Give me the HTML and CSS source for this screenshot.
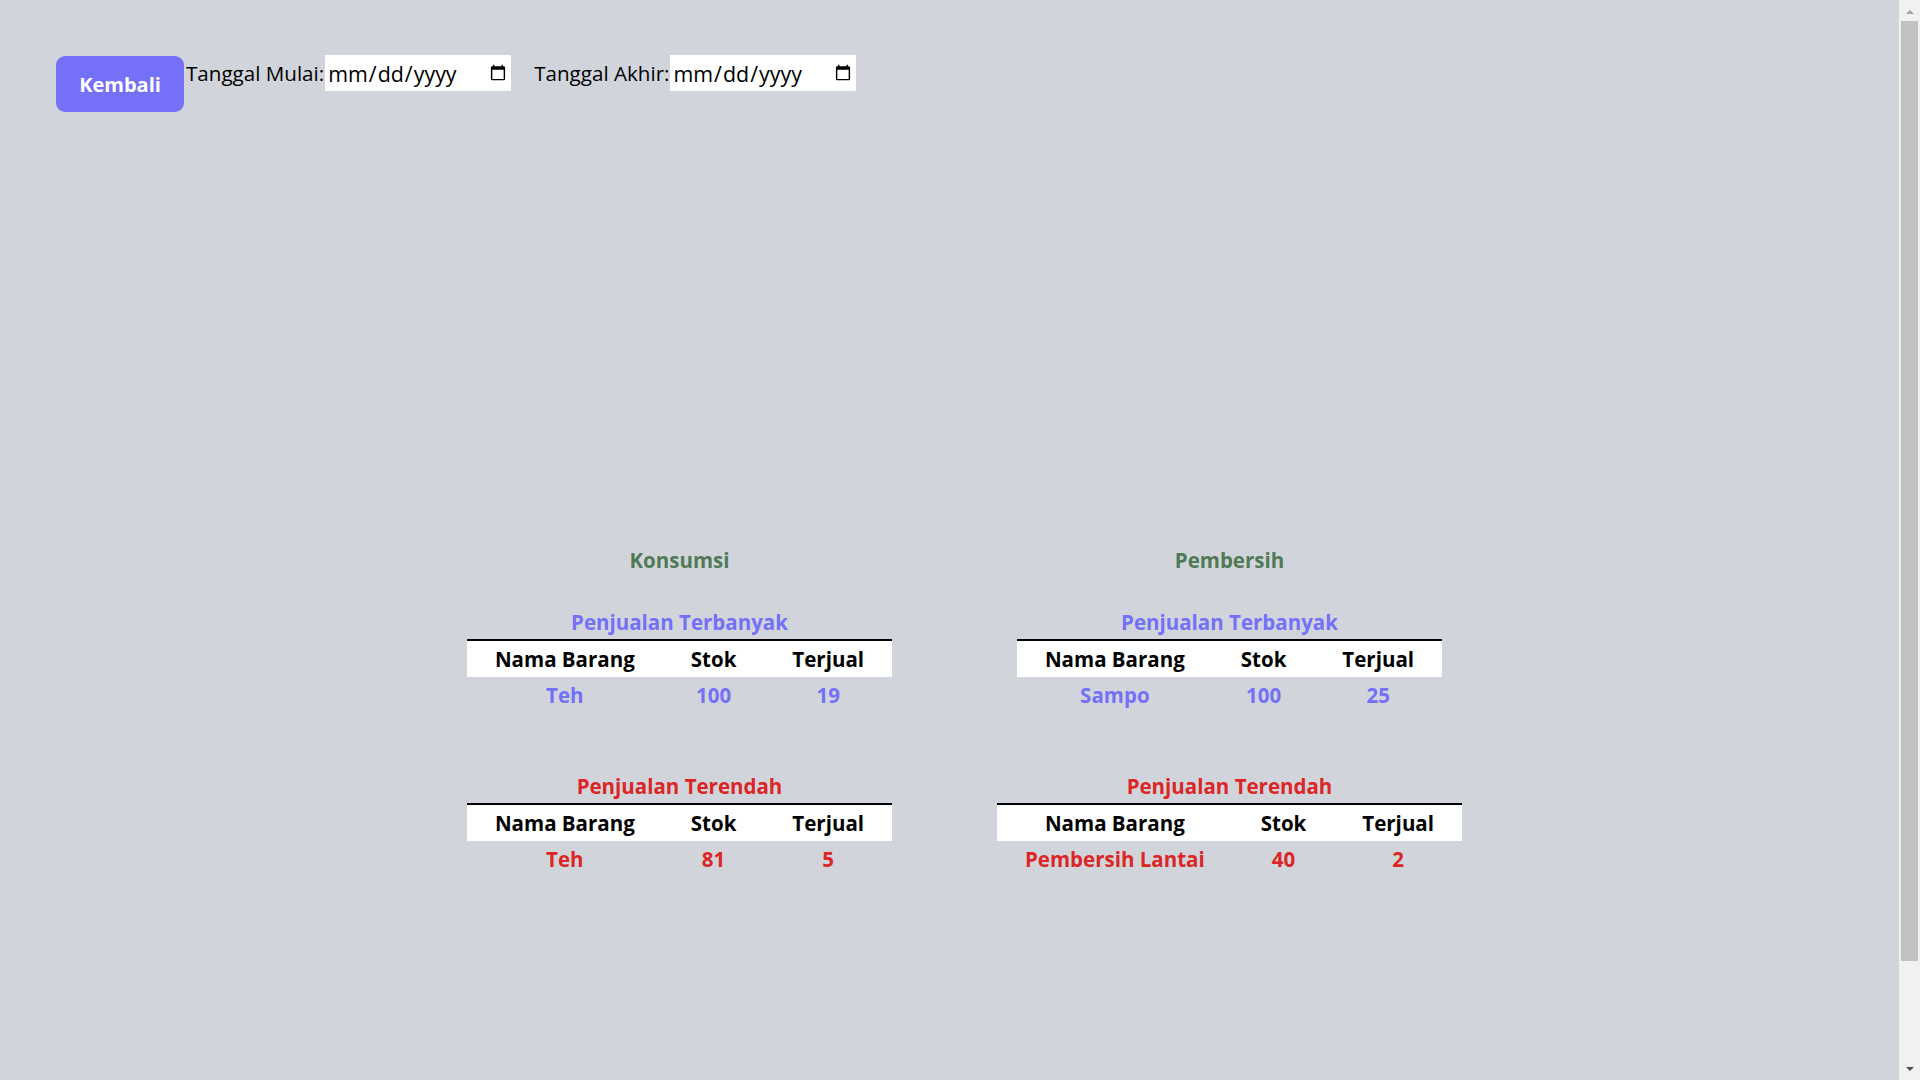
FILE: index.html
```html
<!DOCTYPE html>
<html lang="id">
<head>
<meta charset="utf-8">
<title>Laporan Penjualan</title>
<link rel="stylesheet" href="styles.css">
</head>
<body>
<div class="page">
  <div class="topbar">
    <button class="btn-back" type="button">Kembali</button>
    <div class="date-group">
      <label class="date-label" for="start">Tanggal Mulai:</label>
      <input class="date-input" id="start" type="date">
    </div>
    <div class="date-group date-group-end">
      <label class="date-label" for="end">Tanggal Akhir:</label>
      <input class="date-input" id="end" type="date">
    </div>
  </div>

  <div class="chart-area"></div>

  <div class="categories">
    <section class="category">
      <h2 class="category-title">Konsumsi</h2>
      <div class="report">
        <h3 class="report-title report-top">Penjualan Terbanyak</h3>
        <table class="report-table">
          <thead><tr><th>Nama Barang</th><th>Stok</th><th>Terjual</th></tr></thead>
          <tbody><tr class="row-top"><td>Teh</td><td>100</td><td>19</td></tr></tbody>
        </table>
      </div>
      <div class="report report-second">
        <h3 class="report-title report-low">Penjualan Terendah</h3>
        <table class="report-table">
          <thead><tr><th>Nama Barang</th><th>Stok</th><th>Terjual</th></tr></thead>
          <tbody><tr class="row-low"><td>Teh</td><td>81</td><td>5</td></tr></tbody>
        </table>
      </div>
    </section>

    <section class="category">
      <h2 class="category-title">Pembersih</h2>
      <div class="report">
        <h3 class="report-title report-top">Penjualan Terbanyak</h3>
        <table class="report-table">
          <thead><tr><th>Nama Barang</th><th>Stok</th><th>Terjual</th></tr></thead>
          <tbody><tr class="row-top"><td>Sampo</td><td>100</td><td>25</td></tr></tbody>
        </table>
      </div>
      <div class="report report-second">
        <h3 class="report-title report-low">Penjualan Terendah</h3>
        <table class="report-table">
          <thead><tr><th>Nama Barang</th><th>Stok</th><th>Terjual</th></tr></thead>
          <tbody><tr class="row-low"><td>Pembersih Lantai</td><td>40</td><td>2</td></tr></tbody>
        </table>
      </div>
    </section>
  </div>
</div>
<div class="scrollbar" aria-hidden="true">
  <div class="sb-btn"><span class="sb-arrow sb-arrow-up"></span></div>
  <div class="sb-track"><div class="sb-thumb"></div></div>
  <div class="sb-btn"><span class="sb-arrow sb-arrow-down"></span></div>
</div>
</body>
</html>
```

FILE: styles.css
```css
html {
  background: #d1d5db;
}

body {
  margin: 0;
  display: flex;
  align-items: flex-start;
  background: #d1d5db;
  font-family: "Open Sans", "Noto Sans", "Liberation Sans", sans-serif;
  font-size: 20px;
  line-height: 30px;
  color: #000;
}

.page {
  flex: 1;
  min-width: 0;
  padding-bottom: 316px;
}

/* scrollbar strip */
.scrollbar {
  flex: 0 0 21px;
  width: 21px;
  height: 1080px;
  display: flex;
  flex-direction: column;
  background: #f1f1f1;
}

.sb-btn {
  height: 21px;
  display: flex;
  align-items: center;
  justify-content: center;
  flex-shrink: 0;
}

.sb-arrow {
  width: 0;
  height: 0;
  border-left: 4.5px solid transparent;
  border-right: 4.5px solid transparent;
}

.sb-arrow-up {
  border-bottom: 4px solid #a3a3a3;
  margin-top: 3px;
}

.sb-arrow-down {
  border-top: 4px solid #505050;
  margin-top: -2px;
}

.sb-track {
  flex: 1;
  padding: 0 2px;
}

.sb-thumb {
  height: 940px;
  background: #c1c1c1;
}

/* top bar */
.topbar {
  display: flex;
  align-items: flex-start;
  padding: 55px 0 0 56px;
}

.btn-back {
  margin-top: 1px;
  width: 128px;
  height: 56px;
  border: none;
  border-radius: 9px;
  background: #7470f8;
  color: #fff;
  font-family: inherit;
  font-size: 20px;
  font-weight: 700;
  cursor: pointer;
  padding: 0;
}

.date-group {
  display: flex;
  align-items: center;
  margin-left: 2px;
}

.date-group-end {
  margin-left: 23px;
}

.date-label {
  font-size: 20.6px;
  color: #000;
}

.date-input {
  box-sizing: border-box;
  width: 186px;
  height: 36px;
  border: none;
  padding: 0 2px;
  margin: 0 0 0 1px;
  background: #fff;
  font-family: inherit;
  font-size: 21.4px;
  color: #000;
  border-radius: 0;
}

.date-input::-webkit-calendar-picker-indicator {
  width: 18px;
  height: 18px;
  padding: 0;
  margin: 0 2px 0 0;
}

.chart-area {
  height: 433px;
}

/* category tables */
.categories {
  display: grid;
  grid-template-columns: 550px 550px;
  justify-content: center;
  padding-left: 10px;
}

.category {
  display: flex;
  flex-direction: column;
  align-items: center;
}

.category-title {
  margin: 0;
  font-size: 20.5px;
  line-height: 30px;
  font-weight: 700;
  color: #507a55;
}

.report {
  display: flex;
  flex-direction: column;
  align-items: center;
  margin-top: 32px;
}

.report-second {
  margin-top: 58px;
}

.report-title {
  margin: 0 0 2px;
  font-size: 20.5px;
  line-height: 30px;
  font-weight: 700;
}

.report-top {
  color: #7470f8;
}

.report-low {
  color: #dc2626;
}

.report-table {
  border-collapse: collapse;
  border-top: 2px solid #000;
}

.report-table th,
.report-table td {
  padding: 3px 28px;
  font-size: 20.5px;
  line-height: 30px;
  font-weight: 700;
  text-align: center;
  white-space: nowrap;
}

.report-table th {
  background: #fff;
  color: #000;
}

.row-top td {
  color: #7470f8;
}

.row-low td {
  color: #dc2626;
}
```
